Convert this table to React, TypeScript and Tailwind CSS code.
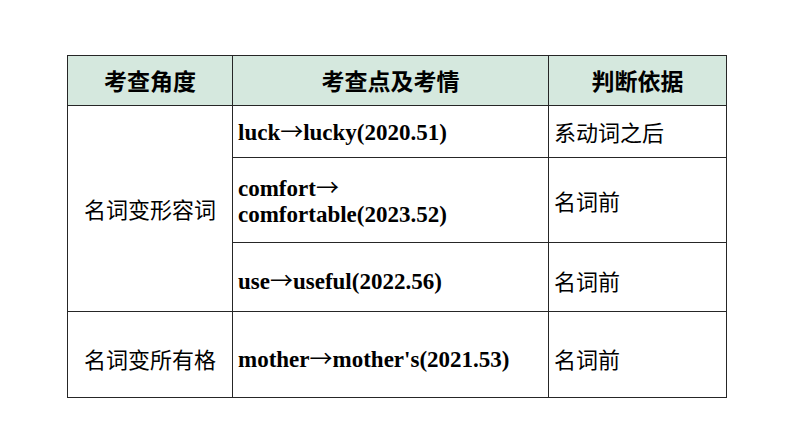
import React from 'react';

const cjk = "font-['Noto_Sans_CJK_SC',sans-serif]";
const en = "font-['Liberation_Serif','Noto_Sans_CJK_SC',serif] font-bold text-[23px] leading-[26px]";

const cell = 'border border-[#262626] align-middle';

const Arrow: React.FC = () => (
  <span className="font-['Noto_Sans_CJK_SC',sans-serif] font-normal">→</span>
);

const App: React.FC = () => {
  return (
    <div className="w-[794px] h-[447px] bg-white pt-[55px] pl-[67px]">
      <table className="table-fixed border-collapse w-[659px] text-black">
        <colgroup>
          <col className="w-[165px]" />
          <col className="w-[316px]" />
          <col className="w-[178px]" />
        </colgroup>
        <thead>
          <tr className="h-[50px] bg-[#d5e8de]">
            <th className={`${cell} ${cjk} text-[23px] font-bold text-center`}>考查角度</th>
            <th className={`${cell} ${cjk} text-[23px] font-bold text-center`}>考查点及考情</th>
            <th className={`${cell} ${cjk} text-[23px] font-bold text-center`}>判断依据</th>
          </tr>
        </thead>
        <tbody>
          <tr className="h-[52px]">
            <td rowSpan={3} className={`${cell} ${cjk} text-[22px] text-center`}>
              名词变形容词
            </td>
            <td className={`${cell} ${en} px-[5px]`}>
              luck<Arrow />lucky(2020.51)
            </td>
            <td className={`${cell} ${cjk} text-[22px] px-[5px]`}>系动词之后</td>
          </tr>
          <tr className="h-[85px]">
            <td className={`${cell} ${en} px-[5px]`}>
              comfort<Arrow />
              <br />
              comfortable(2023.52)
            </td>
            <td className={`${cell} ${cjk} text-[22px] px-[5px]`}>名词前</td>
          </tr>
          <tr className="h-[69px]">
            <td className={`${cell} ${en} px-[5px] pt-[7px]`}>
              use<Arrow />useful(2022.56)
            </td>
            <td className={`${cell} ${cjk} text-[22px] px-[5px] pt-[7px]`}>名词前</td>
          </tr>
          <tr className="h-[86px]">
            <td className={`${cell} ${cjk} text-[22px] text-center pt-[8px]`}>名词变所有格</td>
            <td className={`${cell} ${en} px-[5px] pt-[8px]`}>
              mother<Arrow />mother's(2021.53)
            </td>
            <td className={`${cell} ${cjk} text-[22px] px-[5px] pt-[8px]`}>名词前</td>
          </tr>
        </tbody>
      </table>
    </div>
  );
};

export default App;
